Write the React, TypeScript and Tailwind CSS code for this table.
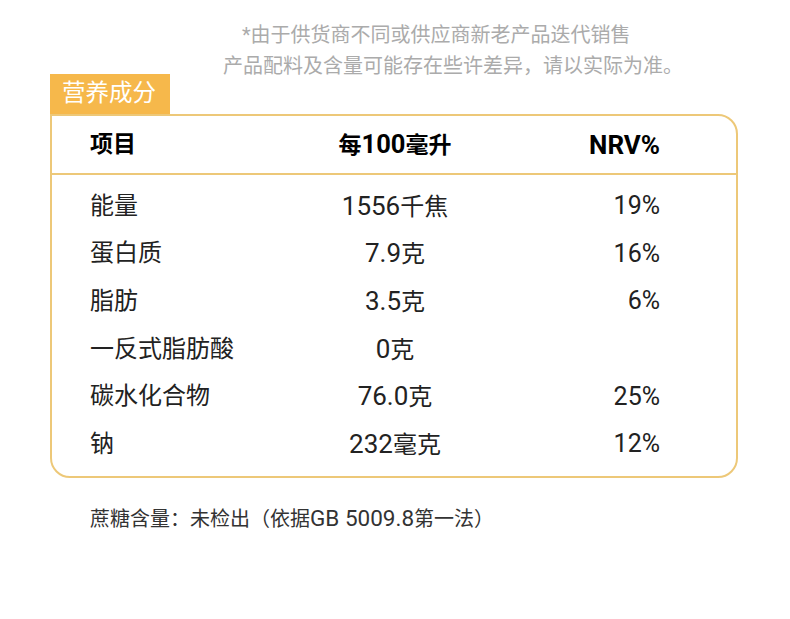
import React from "react";

interface Row {
  name: string;
  amount: string;
  nrv: string;
}

const rows: Row[] = [
  { name: "能量", amount: "1556千焦", nrv: "19%" },
  { name: "蛋白质", amount: "7.9克", nrv: "16%" },
  { name: "脂肪", amount: "3.5克", nrv: "6%" },
  { name: "一反式脂肪酸", amount: "0克", nrv: "" },
  { name: "碳水化合物", amount: "76.0克", nrv: "25%" },
  { name: "钠", amount: "232毫克", nrv: "12%" },
];

const font = "font-['Roboto','Noto_Sans_CJK_SC',sans-serif]";

// latin runs render a bit larger than the CJK ones in the source design
const Mixed: React.FC<{ text: string; latin: string }> = ({ text, latin }) => {
  const parts = text.split(/([A-Za-z0-9.% ]+)/).filter(Boolean);
  return (
    <>
      {parts.map((p, i) =>
        /^[A-Za-z0-9.% ]+$/.test(p) ? (
          <span key={i} className={latin}>
            {p}
          </span>
        ) : (
          <span key={i}>{p}</span>
        )
      )}
    </>
  );
};

const App: React.FC = () => {
  return (
    <div className={`w-[790px] h-[619px] bg-white ${font} overflow-hidden`}>
      {/* disclaimer */}
      <div className="h-[74px] pt-[20px] text-[20px] leading-[31px] text-[#ababab]">
        <p className="pl-[242px] whitespace-nowrap">*由于供货商不同或供应商新老产品迭代销售</p>
        <p className="pl-[223px] whitespace-nowrap">产品配料及含量可能存在些许差异，请以实际为准。</p>
      </div>

      <div className="pl-[50px]">
        <div className="w-[120px] h-[40px] bg-[#f6b84b] flex items-center pl-[12px] text-white text-[23.5px]">
          营养成分
        </div>

        <div className="w-[688px] border-2 border-[#edc878] rounded-[20px] rounded-tl-none bg-white">
          <div className="flex items-center h-[59px] border-b-2 border-[#edc878] text-[23px] leading-none font-bold text-black">
            <div className="w-[218px] pl-[38px]">项目</div>
            <div className="w-[250px] text-center">
              <Mixed text="每100毫升" latin="text-[25.5px]" />
            </div>
            <div className="w-[140px] text-right text-[26px]">NRV%</div>
          </div>

          <div className="pt-[7px] pb-[8.4px]">
            {rows.map((row) => (
              <div key={row.name} className="flex items-center h-[47.6px] text-[24px] leading-none text-[#222]">
                <div className="w-[218px] pl-[38px] whitespace-nowrap">{row.name}</div>
                <div className="w-[250px] text-center">
                  <Mixed text={row.amount} latin="text-[26px]" />
                </div>
                <div className="w-[140px] text-right text-[25px]">{row.nrv}</div>
              </div>
            ))}
          </div>
        </div>

        <p className="mt-[26px] pl-[40px] text-[20px] leading-[28px] text-[#333] whitespace-nowrap">
          <Mixed text="蔗糖含量：未检出（依据GB 5009.8第一法）" latin="text-[22.5px]" />
        </p>
      </div>
    </div>
  );
};

export default App;
